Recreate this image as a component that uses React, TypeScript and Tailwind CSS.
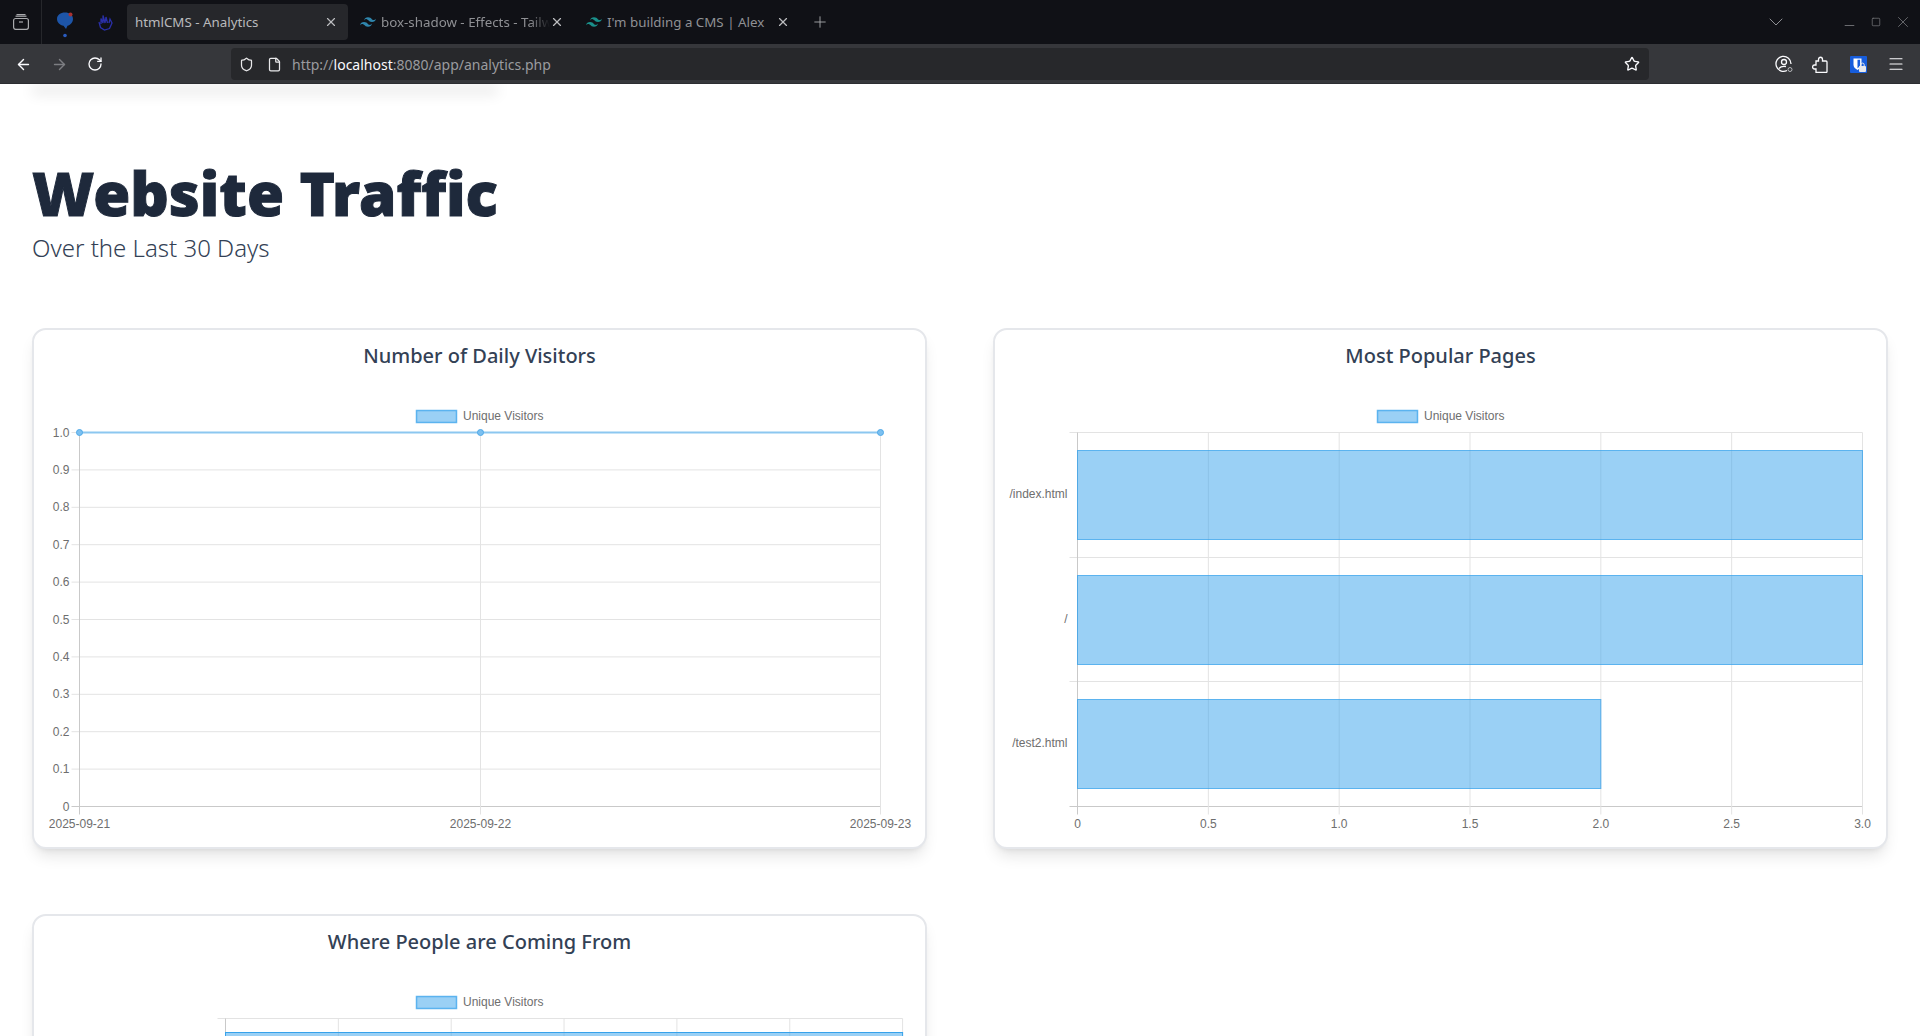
import {
  ArrowLeft,
  ArrowRight,
  ChevronDown,
  File,
  Menu,
  Minus,
  Plus,
  RotateCw,
  Shield,
  Square,
  Star,
  X,
} from "lucide-react";
import { SiTailwindcss } from "react-icons/si";

const axisFont = '"Liberation Sans", Arial, sans-serif';
const TICK = "#6e6e6e";
const GRID = "#e3e3e3";
const AXIS = "#c9c9c9";
const BAR_FILL = "rgba(54,162,235,0.5)";
const BAR_LINE = "rgba(54,162,235,0.75)";

// Legend swatch and label, in the coordinates of the card's svg
const Legend = ({ y = 80 }: { y?: number }) => (
  <g>
    <rect x={382.5} y={y + 0.5} width={40} height={12} fill={BAR_FILL} stroke={BAR_LINE} strokeWidth={1.5} />
    <text x={429} y={y + 9.5} fontSize={12} fill={TICK} fontFamily={axisFont}>
      Unique Visitors
    </text>
  </g>
);

const DailyVisitors = () => {
  const left = 45.5;
  const right = 846.5;
  const mid = 446.5;
  const top = 102.5;
  const bottom = 476.5;
  const ys = Array.from({ length: 11 }, (_, i) => i);
  return (
    <svg width={890} height={515} className="block absolute left-0 top-0">
      <Legend />
      {ys.map((i) => {
        const y = bottom - ((bottom - top) * i) / 10;
        return (
          <g key={i}>
            <line x1={left - 8} x2={right} y1={y} y2={y} stroke={i === 0 ? AXIS : GRID} strokeWidth={1} />
            <text x={left - 10} y={y + 4} textAnchor="end" fontSize={12} fill={TICK} fontFamily={axisFont}>
              {i === 0 ? "0" : i === 10 ? "1.0" : `0.${i}`}
            </text>
          </g>
        );
      })}
      {[
        [left, "2025-09-21"],
        [mid, "2025-09-22"],
        [right, "2025-09-23"],
      ].map(([x, label]) => (
        <g key={label}>
          <line x1={x} x2={x} y1={top} y2={bottom + 8} stroke={x === left ? AXIS : GRID} />
          <text x={x} y={bottom + 21} textAnchor="middle" fontSize={12} fill={TICK} fontFamily={axisFont}>
            {label}
          </text>
        </g>
      ))}
      <line x1={left} x2={right} y1={top} y2={top} stroke="#8cc7f0" strokeWidth={2} />
      {[left, mid, right].map((x) => (
        <circle key={x} cx={x} cy={top} r={3} fill="#7cc0f0" stroke="#4fa9e8" />
      ))}
    </svg>
  );
};

const PopularPages = () => {
  const left = 82.5;
  const step = 130.83;
  const top = 102.5;
  const bottom = 476.5;
  const bars = [
    { label: "/index.html", y: 120.5, value: 3 },
    { label: "/", y: 245.5, value: 3 },
    { label: "/test2.html", y: 369.5, value: 2 },
  ];
  return (
    <svg width={890} height={515} className="block absolute left-0 top-0">
      <Legend />
      {[0, 1, 2, 3].map((i) => {
        const y = Math.round(top + 124.67 * i - 0.5) + 0.5;
        return <line key={i} x1={left - 8} x2={left + step * 6} y1={y} y2={y} stroke={i === 3 ? AXIS : GRID} />;
      })}
      {[0, 1, 2, 3, 4, 5, 6].map((i) => {
        const x = left + step * i;
        return (
          <g key={i}>
            <line x1={x} x2={x} y1={top} y2={bottom + 8} stroke={i === 0 ? AXIS : GRID} />
            <text x={x} y={bottom + 21} textAnchor="middle" fontSize={12} fill={TICK} fontFamily={axisFont}>
              {i === 0 ? "0" : (i / 2).toFixed(1)}
            </text>
          </g>
        );
      })}
      {bars.map((b) => (
        <g key={b.label}>
          <rect
            x={left}
            y={b.y}
            width={b.value * 2 * step}
            height={89}
            fill={BAR_FILL}
            stroke={BAR_LINE}
            strokeWidth={1}
          />
          <text x={left - 10} y={b.y + 47} textAnchor="end" fontSize={12} fill={TICK} fontFamily={axisFont}>
            {b.label}
          </text>
        </g>
      ))}
    </svg>
  );
};

const Referrers = () => {
  const left = 191.5;
  const step = 112.85;
  const top = 102.5;
  return (
    <svg width={890} height={200} className="block absolute left-0 top-0">
      <Legend />
      <line x1={left - 8} x2={left + step * 6} y1={top} y2={top} stroke={GRID} />
      {[0, 1, 2, 3, 4, 5, 6].map((i) => {
        const x = left + step * i;
        return <line key={i} x1={x} x2={x} y1={top} y2={200} stroke={i === 0 ? AXIS : GRID} />;
      })}
      <rect x={left} y={116.5} width={step * 6} height={80} fill={BAR_FILL} stroke="rgb(54,162,235)" />
    </svg>
  );
};

const ChartCard = ({ title, children }: { title: string; children: React.ReactNode }) => (
  <div className="relative h-[521px] rounded-[14px] border-2 border-[#e5e7eb] bg-white shadow-lg">
    <h2 className="pt-[11px] text-center text-[20px] leading-[30px] font-medium text-[#334155]">{title}</h2>
    {children}
  </div>
);

const Tab = ({
  title,
  active,
  fade,
  icon,
}: {
  title: string;
  active?: boolean;
  fade?: boolean;
  icon?: React.ReactNode;
}) => (
  <div
    className={`mr-[5px] flex h-[36px] w-[221px] items-center rounded-[4px] pr-[10px] text-[13.33px] ${
      active ? "bg-[#26272b] pl-[8px] text-[#b9babd]" : "pl-[7px] text-[#8f9094]"
    }`}
  >
    {icon && <span className="mr-[5px] flex w-[16px] shrink-0">{icon}</span>}
    <span
      className={`flex-1 overflow-hidden whitespace-nowrap pt-[1px] ${
        fade ? "[mask-image:linear-gradient(to_right,black_88%,transparent)]" : ""
      }`}
    >
      {title}
    </span>
    <X size={14} className="shrink-0 text-[#bcbdc0]" />
  </div>
);

export default function App() {
  return (
    <div className="flex h-[1036px] flex-col overflow-hidden bg-white font-['Noto_Sans',sans-serif]">
      <div className="flex h-[44px] shrink-0 items-center bg-[#101116]">
        <div className="flex h-full w-[42px] items-center justify-center border-r border-[#26272b]">
          <svg width={16} height={16} viewBox="0 0 16 16" fill="none" stroke="#a9aaad" strokeWidth={1.2}>
            <rect x={0.6} y={4.5} width={14.8} height={10.8} rx={2} />
            <path d="M2.5 2.2h11" />
            <path d="M3.5 0.6h9" />
            <path d="M6 8h4" />
          </svg>
        </div>
        <div className="flex w-[46px] justify-center pt-[6px]">
          <svg width={18} height={26} viewBox="0 0 18 26">
            <path d="M9 0.500C13.500 0.500 17 3 17 7c0 3.500-3 6-5.500 6.800L10 17l-2.500-3.200C4 13.300 1 10.500 1 7c0-4 3.500-6.500 8-6.500z" fill="#1d55a8" />
            <circle cx={14.500} cy={2.500} r={2} fill="#a83232" />
            <circle cx={9} cy={23.500} r={1.800} fill="#2a5cc0" />
          </svg>
        </div>
        <div className="mr-[5px] flex w-[34px] justify-center">
          <svg width={16} height={17} viewBox="0 0 16 17" fill="none" stroke="#2a2fa8" strokeWidth={1.3}>
            <path d="M2 8l1.500 5.500L7.500 16l5-1.500L15 9l-2-4-1 4M4 10V4.500l2 4.500V1.500l2 7.500 1-6 1.500 6" />
          </svg>
        </div>
        <Tab title="htmlCMS - Analytics" active />
        <Tab
          title="box-shadow - Effects - Tailwind CSS"
          fade
          icon={<SiTailwindcss size={16} className="text-[#2f86ad]" />}
        />
        <Tab title="I'm building a CMS | Alex" icon={<SiTailwindcss size={16} className="text-[#1a8f8a]" />} />
        <Plus size={18} strokeWidth={1.2} className="ml-[6px] text-[#a9aaad]" />
        <div className="flex-1" />
        <ChevronDown size={24} strokeWidth={1} className="mr-[54px] text-[#8e8f93]" />
        <Minus size={15} strokeWidth={1.3} className="mr-[14px] mt-[6px] text-[#7f8084]" />
        <Square size={10} strokeWidth={1.6} className="mr-[13px] text-[#7f8084]" />
        <X size={18} strokeWidth={1} className="mr-[8px] text-[#7f8084]" />
      </div>

      <div className="flex h-[40px] shrink-0 items-center border-b border-[#2c2d31] bg-[#36373b] pt-[1px]">
        <ArrowLeft size={17} className="ml-[15px] text-[#fbfbfe]" />
        <ArrowRight size={17} className="ml-[19px] text-[#7d7e82]" />
        <RotateCw size={16} className="ml-[19px] text-[#fbfbfe]" />
        <div className="ml-[128px] flex h-[32px] w-[1418px] items-center rounded-[4px] bg-[#27282b] text-[14px]">
          <Shield size={15} className="ml-[8px] text-[#e8e8ea]" />
          <File size={15} className="ml-[13px] text-[#e8e8ea]" />
          <span className="ml-[10px] text-[#9a9b9f]">
            http://<span className="text-[#fbfbfe]">localhost</span>:8080/app/analytics.php
          </span>
          <div className="flex-1" />
          <Star size={16} className="mr-[9px] text-[#fbfbfe]" />
        </div>
        <div className="flex-1" />
        <svg width={18} height={18} viewBox="0 0 18 18" fill="none" stroke="#fbfbfe" strokeWidth={1.3} className="mr-[19px]">
          <path d="M12 15.500A7.500 7.500 0 1 1 16 9" />
          <circle cx={9} cy={7} r={2.500} />
          <path d="M4 13.500c1.500-2 4-2.500 7-2" />
          <circle cx={15} cy={14.500} r={2} strokeWidth={1} stroke="#b5b6b9" />
        </svg>
        <svg width={16} height={17} viewBox="0 0 16 17" fill="none" stroke="#fbfbfe" strokeWidth={1.3} className="mr-[22px]">
          <path d="M6.500 5V3.500c0-3 4-3 4 0V5H14a1 1 0 0 1 1 1v9.500a1 1 0 0 1-1 1H4v-3.500H2.500c-2.500 0-2.500-4 0-4H4V5z" />
        </svg>
        <svg width={17} height={17} viewBox="0 0 17 17" className="mr-[20px]">
          <rect width={17} height={17} rx={1} fill="#175ddc" />
          <path d="M3.500 2.500h8V9c0 2-2 4-4 5-2-1-4-3-4-5z" fill="#fff" />
          <path d="M7.500 3.800h2.600V9c0 1-1.300 2.500-2.600 3.300z" fill="#175ddc" />
          <rect x={9} y={10} width={7} height={6} rx={1} fill="#e8e8ea" />
          <path d="M10.800 10V8.800a1.700 1.700 0 0 1 3.400 0V10" fill="none" stroke="#e8e8ea" />
        </svg>
        <Menu size={18} strokeWidth={1.5} className="mr-[15px] text-[#fbfbfe]" />
      </div>

      <div className="relative flex-1 overflow-hidden">
        {/* shadow of the nav that sits behind the browser toolbar */}
        <div className="ml-[36px] h-0 w-[458px] shadow-[0_6px_14px_4px_rgba(0,0,0,0.1)]" />
        <div className="px-[32px] pt-[79px]">
          <h1 className="text-[60px] leading-[60px] font-black text-[#1e293b] [-webkit-text-stroke:1px_#1e293b]">
            Website Traffic
          </h1>
          <p className="mt-[9px] text-[24px] leading-[32px] font-light text-[#334155]">Over the Last 30 Days</p>
          <div className="mt-[64px] grid grid-cols-2 gap-x-[66px] gap-y-[65px]">
            <ChartCard title="Number of Daily Visitors">
              <DailyVisitors />
            </ChartCard>
            <ChartCard title="Most Popular Pages">
              <PopularPages />
            </ChartCard>
            <ChartCard title="Where People are Coming From">
              <Referrers />
            </ChartCard>
          </div>
        </div>
      </div>
    </div>
  );
}
